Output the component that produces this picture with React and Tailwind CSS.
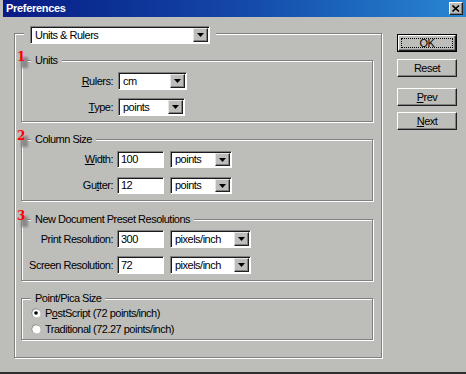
import React from "react";

const BG = "bg-[#bdbeba]";

function Arrow() {
  return (
    <svg width="7" height="4" viewBox="0 0 7 4" className="block">
      <polygon points="0,0 7,0 3.5,4" fill="#000" />
    </svg>
  );
}

function ArrowBtn() {
  return (
    <div className="my-[1px] mr-[1px] ml-0 w-[15px] flex items-center justify-center bg-[#bdbeba] border border-t-[#e6e6e6] border-l-[#e6e6e6] border-r-[#202020] border-b-[#202020] shadow-[inset_-1px_-1px_0_#808080]">
      <Arrow />
    </div>
  );
}

function Select({ value, w, h }) {
  return (
    <div
      className={`flex items-stretch bg-white border border-t-[#808080] border-l-[#808080] border-r-white border-b-white shadow-[inset_1px_1px_0_#1a1a1a] ${w} ${h}`}
    >
      <span className="flex-1 pl-[4px] flex items-center leading-none whitespace-nowrap overflow-hidden">
        {value}
      </span>
      <ArrowBtn />
    </div>
  );
}

function Input({ value, h }) {
  return (
    <div
      className={`w-[47px] ${h} flex items-center pl-[3px] bg-white border border-t-[#808080] border-l-[#808080] border-r-white border-b-white shadow-[inset_1px_1px_0_#1a1a1a] leading-none`}
    >
      {value}
    </div>
  );
}

function Group({ legend, num, className, children }) {
  return (
    <div
      className={`relative w-[352px] border border-[#808080] shadow-[inset_1px_1px_0_#fff,1px_1px_0_#fff] ${className}`}
    >
      {num && (
        <>
          <div className="absolute left-[-1px] top-[-4px] w-[7px] h-[11px] bg-[#8a8a8a] blur-[1px]" />
          <span className="absolute left-[-5px] top-[-10px] text-[#ff0000] font-bold text-[12px] leading-[13px] font-['DejaVu_Serif',serif] tracking-normal">
            {num}
          </span>
        </>
      )}
      <span className={`absolute left-[9px] top-[-7px] px-[4px] ${BG} leading-[12px] whitespace-nowrap`}>
        {legend}
      </span>
      {children}
    </div>
  );
}

function U({ children }) {
  return <span className="underline underline-offset-[1px]">{children}</span>;
}

function Row({ label, children, h, className = "" }) {
  return (
    <div className={`flex items-center ${h} ${className}`}>
      <div className="w-[91px] text-right whitespace-nowrap leading-none">{label}</div>
      {children}
    </div>
  );
}

function Radio({ checked }) {
  return (
    <svg width="10" height="10" viewBox="0 0 10 10" className="block">
      <circle cx="5" cy="5" r="4.5" fill="#808080" />
      <circle cx="5.5" cy="5.5" r="4" fill="#fff" />
      <circle cx="5" cy="5" r="3.5" fill="#fff" />
      {checked && <circle cx="5" cy="5" r="1.8" fill="#000" />}
    </svg>
  );
}

function Button({ children, def, className = "" }) {
  if (def) {
    return (
      <div className={`w-[60px] h-[18px] border border-black ${className}`}>
        <div className="w-full h-full border border-t-white border-l-white border-r-[#202020] border-b-[#202020] shadow-[inset_-1px_-1px_0_#808080] flex items-center justify-center p-[2px]">
          <div className="w-full h-full border border-dotted border-black flex items-center justify-center leading-none">
            {children}
          </div>
        </div>
      </div>
    );
  }
  return (
    <div
      className={`w-[60px] h-[18px] border border-t-white border-l-white border-r-[#202020] border-b-[#202020] shadow-[inset_-1px_-1px_0_#808080] flex items-center justify-center leading-none ${className}`}
    >
      {children}
    </div>
  );
}

export default function App() {
  return (
    <div
      className={`w-[466px] h-[374px] ${BG} flex flex-col text-black text-[11px] tracking-[-0.5px] font-['Liberation_Sans',Arial,sans-serif] border-b-2 border-[#303030] overflow-hidden`}
    >
      {/* Title bar */}
      <div className="ml-[3px] h-[17px] flex items-center justify-between bg-gradient-to-r from-[#0a1a84] via-[#1446a8] to-[#2a86d2] pl-[3px] pr-[3px]">
        <span className="text-white font-bold text-[11px] tracking-[-0.3px] leading-none">
          Preferences
        </span>
        <div className="w-[14px] h-[13px] bg-[#bdbeba] border border-t-white border-l-white border-r-[#202020] border-b-[#202020] shadow-[inset_-1px_-1px_0_#808080] flex items-center justify-center">
          <svg width="8" height="7" viewBox="0 0 8 7">
            <path d="M0.5 0.5 L7 6.5 M7 0.5 L0.5 6.5" stroke="#000" strokeWidth="1.6" />
          </svg>
        </div>
      </div>

      <div className="flex">
        {/* Outer frame */}
        <div className="relative ml-[14px] mt-[16px] w-[368px] h-[325px] border border-[#808080] shadow-[inset_1px_1px_0_#fff,1px_1px_0_#fff] pt-[26px] pl-[6px] flex flex-col">
          <div className={`absolute left-[9px] top-[-8px] px-[6px] ${BG}`}>
            <Select value="Units & Rulers" w="w-[180px]" h="h-[18px]" />
          </div>

          <Group legend="Units" num="1" className="h-[62px] pt-[11px] flex flex-col gap-[8px]">
            <Row label={<><U>R</U>ulers:</>} h="h-[18px]">
              <div className="ml-[5px]">
                <Select value="cm" w="w-[69px]" h="h-[18px]" />
              </div>
            </Row>
            <Row label={<><U>T</U>ype:</>} h="h-[18px]">
              <div className="ml-[5px]">
                <Select value="points" w="w-[67px]" h="h-[18px]" />
              </div>
            </Row>
          </Group>

          <Group legend="Column Size" num="2" className="mt-[17px] h-[62px] pt-[11px] flex flex-col gap-[9px]">
            <Row label={<><U>W</U>idth:</>} h="h-[17px]">
              <div className="ml-[4px]">
                <Input value="100" h="h-[17px]" />
              </div>
              <div className="ml-[6px]">
                <Select value="points" w="w-[62px]" h="h-[17px]" />
              </div>
            </Row>
            <Row label={<>Gu<U>t</U>ter:</>} h="h-[17px]">
              <div className="ml-[4px]">
                <Input value="12" h="h-[17px]" />
              </div>
              <div className="ml-[6px]">
                <Select value="points" w="w-[62px]" h="h-[17px]" />
              </div>
            </Row>
          </Group>

          <Group
            legend="New Document Preset Resolutions"
            num="3"
            className="mt-[18px] h-[62px] pt-[10px] flex flex-col gap-[8px]"
          >
            <Row label="Print Resolution:" h="h-[18px]">
              <div className="ml-[4px]">
                <Input value="300" h="h-[18px]" />
              </div>
              <div className="ml-[6px]">
                <Select value="pixels/inch" w="w-[81px]" h="h-[18px]" />
              </div>
            </Row>
            <Row label="Screen Resolution:" h="h-[18px]">
              <div className="ml-[4px]">
                <Input value="72" h="h-[18px]" />
              </div>
              <div className="ml-[6px]">
                <Select value="pixels/inch" w="w-[81px]" h="h-[18px]" />
              </div>
            </Row>
          </Group>

          <Group legend="Point/Pica Size" className="mt-[17px] h-[42px] pt-[6px] pl-[9px] flex flex-col">
            <div className="flex items-center h-[16px] gap-[4px]">
              <Radio checked />
              <span className="leading-none">
                P<U>o</U>stScript (72 points/inch)
              </span>
            </div>
            <div className="flex items-center h-[16px] gap-[4px]">
              <Radio />
              <span className="leading-none">Traditional (72.27 points/inch)</span>
            </div>
          </Group>
        </div>

        {/* Buttons */}
        <div className="ml-[15px] mt-[17px] flex flex-col">
          <Button def>OK</Button>
          <Button className="mt-[7px]">Reset</Button>
          <Button className="mt-[11px]">
            <span>
              <U>P</U>rev
            </span>
          </Button>
          <Button className="mt-[6px]">
            <span>
              <U>N</U>ext
            </span>
          </Button>
        </div>
      </div>
    </div>
  );
}
